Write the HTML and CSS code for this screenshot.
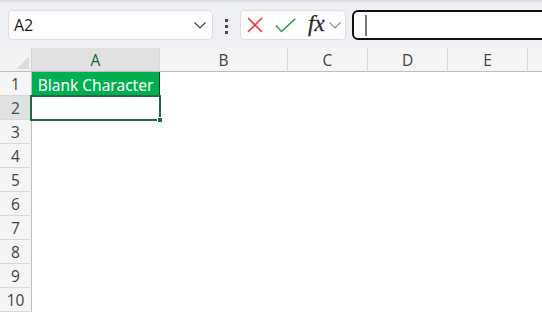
FILE: index.html
```html
<!DOCTYPE html>
<html lang="en">
<head>
<meta charset="utf-8">
<title>Sheet</title>
<link rel="stylesheet" href="styles.css">
</head>
<body>
<div class="app">
  <div class="toolbar">
    <div class="namebox">
      <span class="name">A2</span>
      <svg class="chev" width="12" height="7" viewBox="0 0 12 7"><polyline points="0.5,0.5 6,6 11.5,0.5" fill="none" stroke="#444" stroke-width="1.2"/></svg>
    </div>
    <div class="dots"><span></span><span></span><span></span></div>
    <div class="fxbox">
      <svg class="ico-x" width="16" height="16" viewBox="0 0 16 16"><path d="M1 1 L15 15 M15 1 L1 15" stroke="#e8383d" stroke-width="1.6" fill="none"/></svg>
      <svg class="ico-check" width="21" height="15" viewBox="0 0 21 15"><polyline points="0.8,7.5 6.5,13.5 20.2,0.8" fill="none" stroke="#2f9e4f" stroke-width="1.6"/></svg>
      <span class="fx">fx</span>
      <svg class="chev-sm" width="12" height="7" viewBox="0 0 12 7"><polyline points="0.5,0.5 6,6 11.5,0.5" fill="none" stroke="#8a8a8a" stroke-width="1.1"/></svg>
    </div>
    <div class="formula"><span class="caret"></span></div>
  </div>
  <div class="sheet">
    <div class="corner"></div>
    <div class="ch sel">A</div>
    <div class="ch">B</div>
    <div class="ch">C</div>
    <div class="ch">D</div>
    <div class="ch">E</div>
    <div class="ch last"></div>

    <div class="rh">1</div><div class="cell green">Blank Character</div><div class="cell"></div><div class="cell"></div><div class="cell"></div><div class="cell"></div><div class="cell"></div>
    <div class="rh sel">2</div><div class="cell"></div><div class="cell"></div><div class="cell"></div><div class="cell"></div><div class="cell"></div><div class="cell"></div>
    <div class="rh">3</div><div class="cell"></div><div class="cell"></div><div class="cell"></div><div class="cell"></div><div class="cell"></div><div class="cell"></div>
    <div class="rh">4</div><div class="cell"></div><div class="cell"></div><div class="cell"></div><div class="cell"></div><div class="cell"></div><div class="cell"></div>
    <div class="rh">5</div><div class="cell"></div><div class="cell"></div><div class="cell"></div><div class="cell"></div><div class="cell"></div><div class="cell"></div>
    <div class="rh">6</div><div class="cell"></div><div class="cell"></div><div class="cell"></div><div class="cell"></div><div class="cell"></div><div class="cell"></div>
    <div class="rh">7</div><div class="cell"></div><div class="cell"></div><div class="cell"></div><div class="cell"></div><div class="cell"></div><div class="cell"></div>
    <div class="rh">8</div><div class="cell"></div><div class="cell"></div><div class="cell"></div><div class="cell"></div><div class="cell"></div><div class="cell"></div>
    <div class="rh">9</div><div class="cell"></div><div class="cell"></div><div class="cell"></div><div class="cell"></div><div class="cell"></div><div class="cell"></div>
    <div class="rh">10</div><div class="cell"></div><div class="cell"></div><div class="cell"></div><div class="cell"></div><div class="cell"></div><div class="cell"></div>

    <div class="selection"><span class="handle"></span></div>
  </div>
</div>
</body>
</html>
```

FILE: styles.css
```css
* { box-sizing: border-box; }
html, body { margin: 0; padding: 0; background: #ffffff; }
body { width: 542px; height: 312px; overflow: hidden; font-family: "Open Sans", "Noto Sans", sans-serif; }

.app { width: 542px; height: 312px; overflow: hidden; }

.toolbar {
  height: 48px;
  display: flex;
  align-items: flex-start;
  padding: 10px 0 0 8px;
  background: linear-gradient(to bottom, #d6d7db 0px, #e9eaee 2px, #eff0f4 4px, #eff0f4 100%);
  overflow: hidden;
}

.namebox {
  width: 205px;
  height: 30px;
  flex: none;
  background: #ffffff;
  border: 1px solid #dcdde1;
  border-radius: 5px;
  display: flex;
  align-items: center;
  padding: 0 6px 0 5px;
}
.name { font-size: 16px; color: #1a1a1a; flex: 1; }
.chev { display: block; margin-top: 1px; }

.dots {
  width: 3px;
  margin: 9px 0 0 12px;
  display: flex;
  flex-direction: column;
  gap: 3px;
  flex: none;
}
.dots span { display: block; width: 3px; height: 3px; background: #4a4a4a; }

.fxbox {
  margin-left: 12px;
  width: 106px;
  height: 30px;
  flex: none;
  background: #ffffff;
  border: 1px solid #dcdde1;
  border-radius: 5px;
  display: flex;
  align-items: center;
  padding-left: 6px;
}
.ico-x { display: block; }
.ico-check { display: block; margin-left: 12px; }
.fx {
  font-family: "Liberation Serif", "DejaVu Serif", serif;
  font-style: italic;
  font-size: 23px;
  color: #2b2b2b;
  margin-left: 12px;
  line-height: 1;
  margin-top: -3px;
  -webkit-text-stroke: 0.3px #2b2b2b;
}
.chev-sm { display: block; margin-left: 4px; margin-top: 1px; }

.formula {
  margin-left: 6px;
  width: 220px;
  height: 30px;
  flex: none;
  background: #ffffff;
  border: 2px solid #111111;
  border-radius: 6px;
  display: flex;
  align-items: center;
  padding-left: 11px;
}
.caret { display: block; width: 2px; height: 21px; background: #7a7a7a; }

.sheet {
  position: relative;
  display: grid;
  grid-template-columns: 32px 128px 128px 80px 80px 80px 14px;
  grid-auto-rows: 24px;
  font-family: "Open Sans", "Noto Sans", sans-serif;
}

.corner {
  position: relative;
  background: #f3f3f3;
  border-right: 1px solid #d4d4d4;
  border-bottom: 1px solid #bdbdbd;
}
.corner::after {
  content: "";
  position: absolute;
  right: 2px;
  bottom: 2px;
  width: 12px;
  height: 12px;
  background: linear-gradient(to bottom right, transparent 50%, #dcdcdc 50%);
}

.ch {
  background: #f5f5f5;
  border-right: 1px solid #d9d9d9;
  border-bottom: 1px solid #bdbdbd;
  display: flex;
  align-items: center;
  justify-content: center;
  font-size: 15.5px;
  color: #424242;
  padding-top: 1px;
}
.ch.last { border-right: none; }
.ch.sel { background: #e1e1e1; color: #1d5c3e; }

.rh {
  background: #f5f5f5;
  border-right: 1px solid #bdbdbd;
  border-bottom: 1px solid #d9d9d9;
  display: flex;
  align-items: center;
  justify-content: center;
  font-size: 15.5px;
  color: #424242;
  padding-top: 1px;
}
.rh.sel { background: #e1e1e1; color: #1d5c3e; }

.cell { background: #ffffff; }
.cell.green {
  background: #00b050;
  color: #ffffff;
  font-family: "Noto Sans", "Open Sans", sans-serif;
  font-size: 15.5px;
  display: flex;
  align-items: center;
  justify-content: center;
  border-right: 1px solid #1c3d2a;
  white-space: nowrap;
  overflow: hidden;
  padding-top: 1px;
}

.selection {
  position: absolute;
  left: 30px;
  top: 47px;
  width: 131px;
  height: 26px;
  border: 2px solid #1f6b42;
  pointer-events: none;
}
.handle {
  position: absolute;
  right: -4px;
  bottom: -4px;
  width: 6px;
  height: 6px;
  background: #1f6b42;
  border: 1px solid #ffffff;
}
```
